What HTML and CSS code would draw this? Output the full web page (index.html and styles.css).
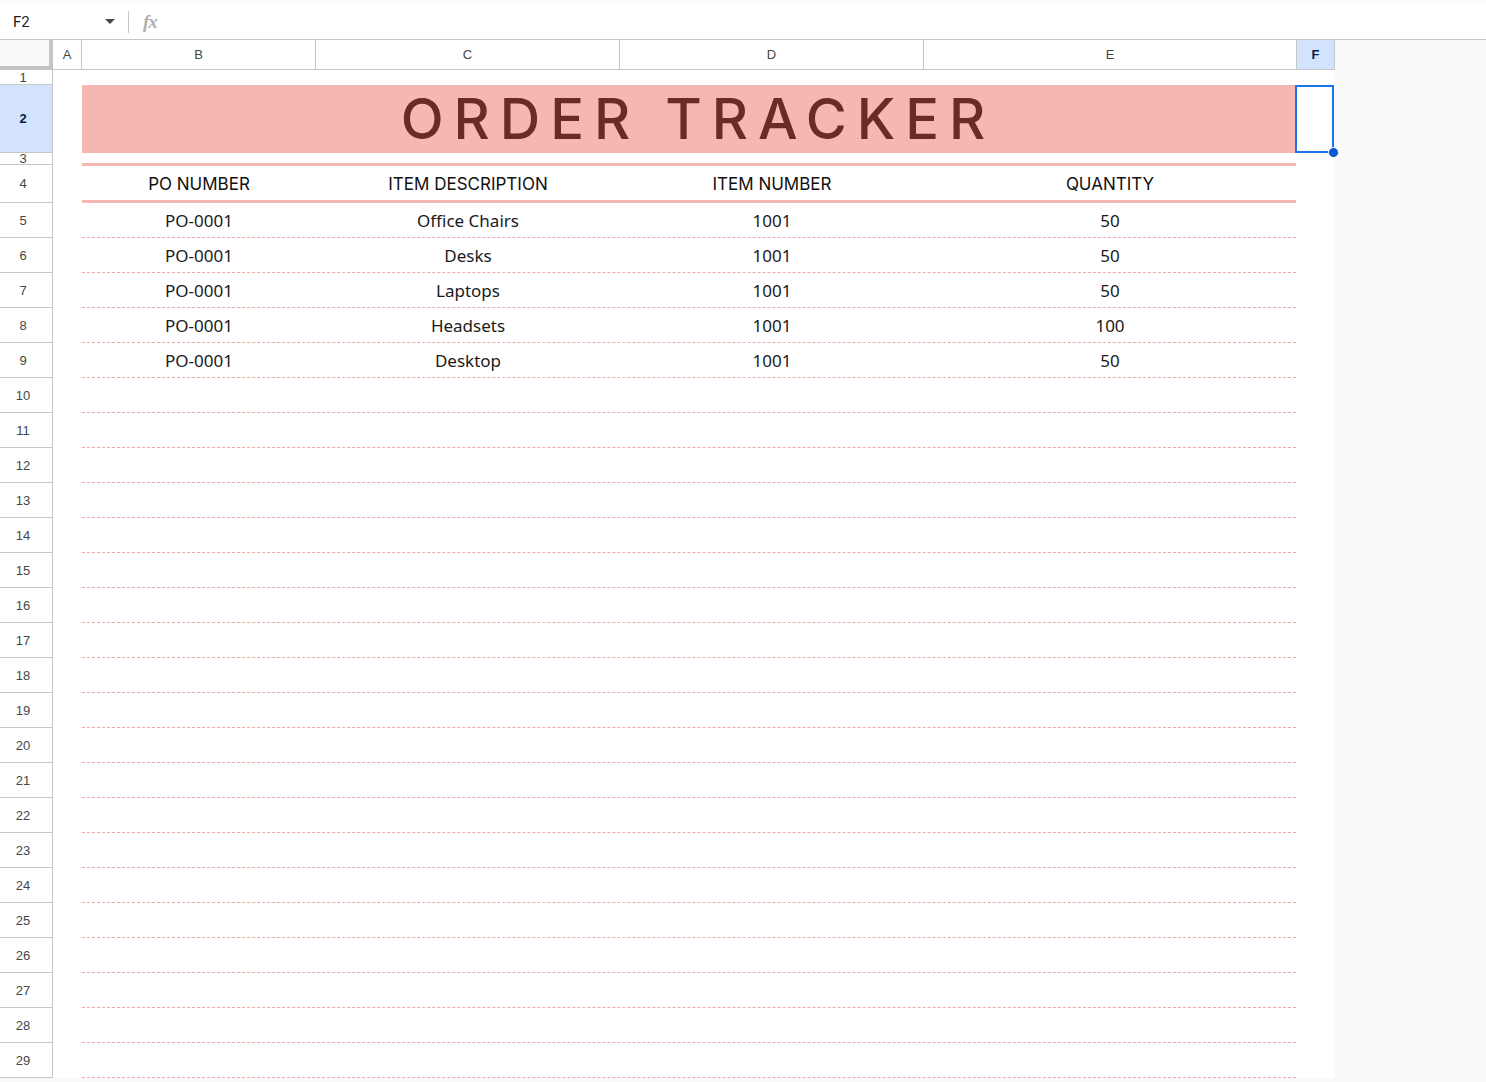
FILE: index.html
```html
<!DOCTYPE html>
<html lang="en">
<head>
  <meta charset="UTF-8">
  <title>Order Tracker</title>
  <link rel="stylesheet" href="styles.css">
</head>
<body>

<div class="topstrip"></div>
<div class="toolbar">
  <div class="namebox">
    <span>F2</span>
    <span class="caret"></span>
  </div>
  <div class="divider"></div>
  <span class="fx">fx</span>
</div>

<div class="sheet">
  <div class="row colheads">
    <div class="corner"></div>
    <div class="ch">A</div>
    <div class="ch">B</div>
    <div class="ch">C</div>
    <div class="ch">D</div>
    <div class="ch">E</div>
    <div class="ch sel">F</div>
  </div>

  <div class="row r1">
    <div class="rn short">1</div>
  </div>

  <div class="row r2">
    <div class="rn sel">2</div>
    <div></div>
    <div class="title">ORDER TRACKER</div>
    <div class="fcell"><span class="handle"></span></div>
  </div>

  <div class="row r3">
    <div class="rn short">3</div>
    <div></div>
    <div class="rule"></div>
  </div>

  <div class="row r4">
    <div class="rn">4</div>
    <div></div>
    <div class="cells heads">
      <div>PO NUMBER</div>
      <div>ITEM DESCRIPTION</div>
      <div>ITEM NUMBER</div>
      <div>QUANTITY</div>
    </div>
  </div>

  <div class="row">
    <div class="rn">5</div>
    <div></div>
    <div class="cells"><div>PO-0001</div><div>Office Chairs</div><div>1001</div><div>50</div></div>
  </div>
  <div class="row">
    <div class="rn">6</div>
    <div></div>
    <div class="cells"><div>PO-0001</div><div>Desks</div><div>1001</div><div>50</div></div>
  </div>
  <div class="row">
    <div class="rn">7</div>
    <div></div>
    <div class="cells"><div>PO-0001</div><div>Laptops</div><div>1001</div><div>50</div></div>
  </div>
  <div class="row">
    <div class="rn">8</div>
    <div></div>
    <div class="cells"><div>PO-0001</div><div>Headsets</div><div>1001</div><div>100</div></div>
  </div>
  <div class="row">
    <div class="rn">9</div>
    <div></div>
    <div class="cells"><div>PO-0001</div><div>Desktop</div><div>1001</div><div>50</div></div>
  </div>

  <div class="row"><div class="rn">10</div><div></div><div class="cells"></div></div>
  <div class="row"><div class="rn">11</div><div></div><div class="cells"></div></div>
  <div class="row"><div class="rn">12</div><div></div><div class="cells"></div></div>
  <div class="row"><div class="rn">13</div><div></div><div class="cells"></div></div>
  <div class="row"><div class="rn">14</div><div></div><div class="cells"></div></div>
  <div class="row"><div class="rn">15</div><div></div><div class="cells"></div></div>
  <div class="row"><div class="rn">16</div><div></div><div class="cells"></div></div>
  <div class="row"><div class="rn">17</div><div></div><div class="cells"></div></div>
  <div class="row"><div class="rn">18</div><div></div><div class="cells"></div></div>
  <div class="row"><div class="rn">19</div><div></div><div class="cells"></div></div>
  <div class="row"><div class="rn">20</div><div></div><div class="cells"></div></div>
  <div class="row"><div class="rn">21</div><div></div><div class="cells"></div></div>
  <div class="row"><div class="rn">22</div><div></div><div class="cells"></div></div>
  <div class="row"><div class="rn">23</div><div></div><div class="cells"></div></div>
  <div class="row"><div class="rn">24</div><div></div><div class="cells"></div></div>
  <div class="row"><div class="rn">25</div><div></div><div class="cells"></div></div>
  <div class="row"><div class="rn">26</div><div></div><div class="cells"></div></div>
  <div class="row"><div class="rn">27</div><div></div><div class="cells"></div></div>
  <div class="row"><div class="rn">28</div><div></div><div class="cells"></div></div>
  <div class="row"><div class="rn">29</div><div></div><div class="cells"></div></div>
</div>

</body>
</html>
```

FILE: styles.css
```css
body {
  margin: 0;
  background-color: #f8f9f8;
  font-family: "Liberation Sans", Arial, sans-serif;
  color: #1f1f1f;
  overflow: hidden;
}
.topstrip {
  height: 4px;
  background-color: #f9fbfd;
}
.toolbar {
  height: 36px;
  background-color: #fff;
  border-bottom: 1px solid #c4c7c5;
  display: flex;
  align-items: center;
  box-sizing: border-box;
}
.namebox {
  width: 115px;
  padding-left: 13px;
  display: flex;
  align-items: center;
  justify-content: space-between;
  box-sizing: border-box;
  font-family: Roboto, "Liberation Sans", sans-serif;
  font-size: 15px;
  color: #1f1f1f;
}
.caret {
  width: 0;
  height: 0;
  border-left: 5px solid transparent;
  border-right: 5px solid transparent;
  border-top: 5px solid #444746;
}
.divider {
  width: 1px;
  height: 22px;
  background-color: #c4c7c5;
  margin-left: 13px;
}
.fx {
  margin-left: 14px;
  font-family: "Liberation Serif", serif;
  font-style: italic;
  font-weight: bold;
  font-size: 19px;
  color: #b0b0b0;
  letter-spacing: -1px;
}

.sheet {
  width: 1335px;
  background-color: #fff;
}
.row {
  display: grid;
  grid-template-columns: 53px 29px 1214px 38px;
  height: 35px;
}
.colheads {
  grid-template-columns: 53px 29px 234px 304px 304px 373px 38px;
  height: 30px;
  border-bottom: 1px solid #c4c7c5;
  box-sizing: border-box;
}
.corner {
  background-color: #f8f9fa;
  border-right: 4px solid #c4c4c4;
  border-bottom: 4px solid #c4c4c4;
  margin-bottom: -1px;
}
.ch {
  border-right: 1px solid #c4c7c5;
  display: flex;
  align-items: center;
  justify-content: center;
  font-size: 13px;
  color: #444746;
}
.ch.sel {
  background-color: #d3e3fd;
  color: #041e49;
  font-weight: bold;
}
.rn {
  border-right: 1px solid #c4c7c5;
  border-bottom: 1px solid #c4c7c5;
  padding-right: 6px;
  display: flex;
  align-items: center;
  justify-content: center;
  font-size: 13px;
  color: #444746;
  overflow: hidden;
}
.rn.short {
  align-items: flex-start;
  padding-top: 1px;
  line-height: 14px;
}
.rn.sel {
  background-color: #d3e3fd;
  color: #041e49;
  font-weight: bold;
}
.r1 { height: 15px; }
.r2 { height: 66px; }
.r3 { height: 14px; }
.r4 { height: 38px; }

.title {
  background-color: #f4b8b1;
  color: #6b2b25;
  font-family: Inter, "Liberation Sans", sans-serif;
  font-weight: 500;
  font-size: 56px;
  letter-spacing: 10px;
  padding-left: 18px;
  display: flex;
  align-items: center;
  justify-content: center;
}
.fcell {
  position: relative;
}
.fcell::after {
  content: "";
  position: absolute;
  inset: 0 0 0 -1px;
  border: 2px solid #1a73e8;
}
.handle {
  position: absolute;
  right: -5px;
  bottom: -5px;
  width: 9px;
  height: 9px;
  border-radius: 50%;
  background-color: #0b57d0;
  border: 1px solid #fff;
  z-index: 2;
}
.rule {
  border-bottom: 3px solid #f4b8b1;
  margin-bottom: -1px;
}
.cells {
  display: grid;
  grid-template-columns: 234px 304px 304px 372px;
  border-bottom: 1px dashed #f0a8a4;
  font-family: "Noto Sans", sans-serif;
  font-size: 17px;
  color: #1a1a1a;
}
.cells div {
  display: flex;
  align-items: center;
  justify-content: center;
}
.cells.heads {
  border-bottom: 3px solid #f4b8b1;
  font-family: Inter, "Liberation Sans", sans-serif;
  font-size: 17px;
  color: #111;
  padding-top: 2px;
}
```
